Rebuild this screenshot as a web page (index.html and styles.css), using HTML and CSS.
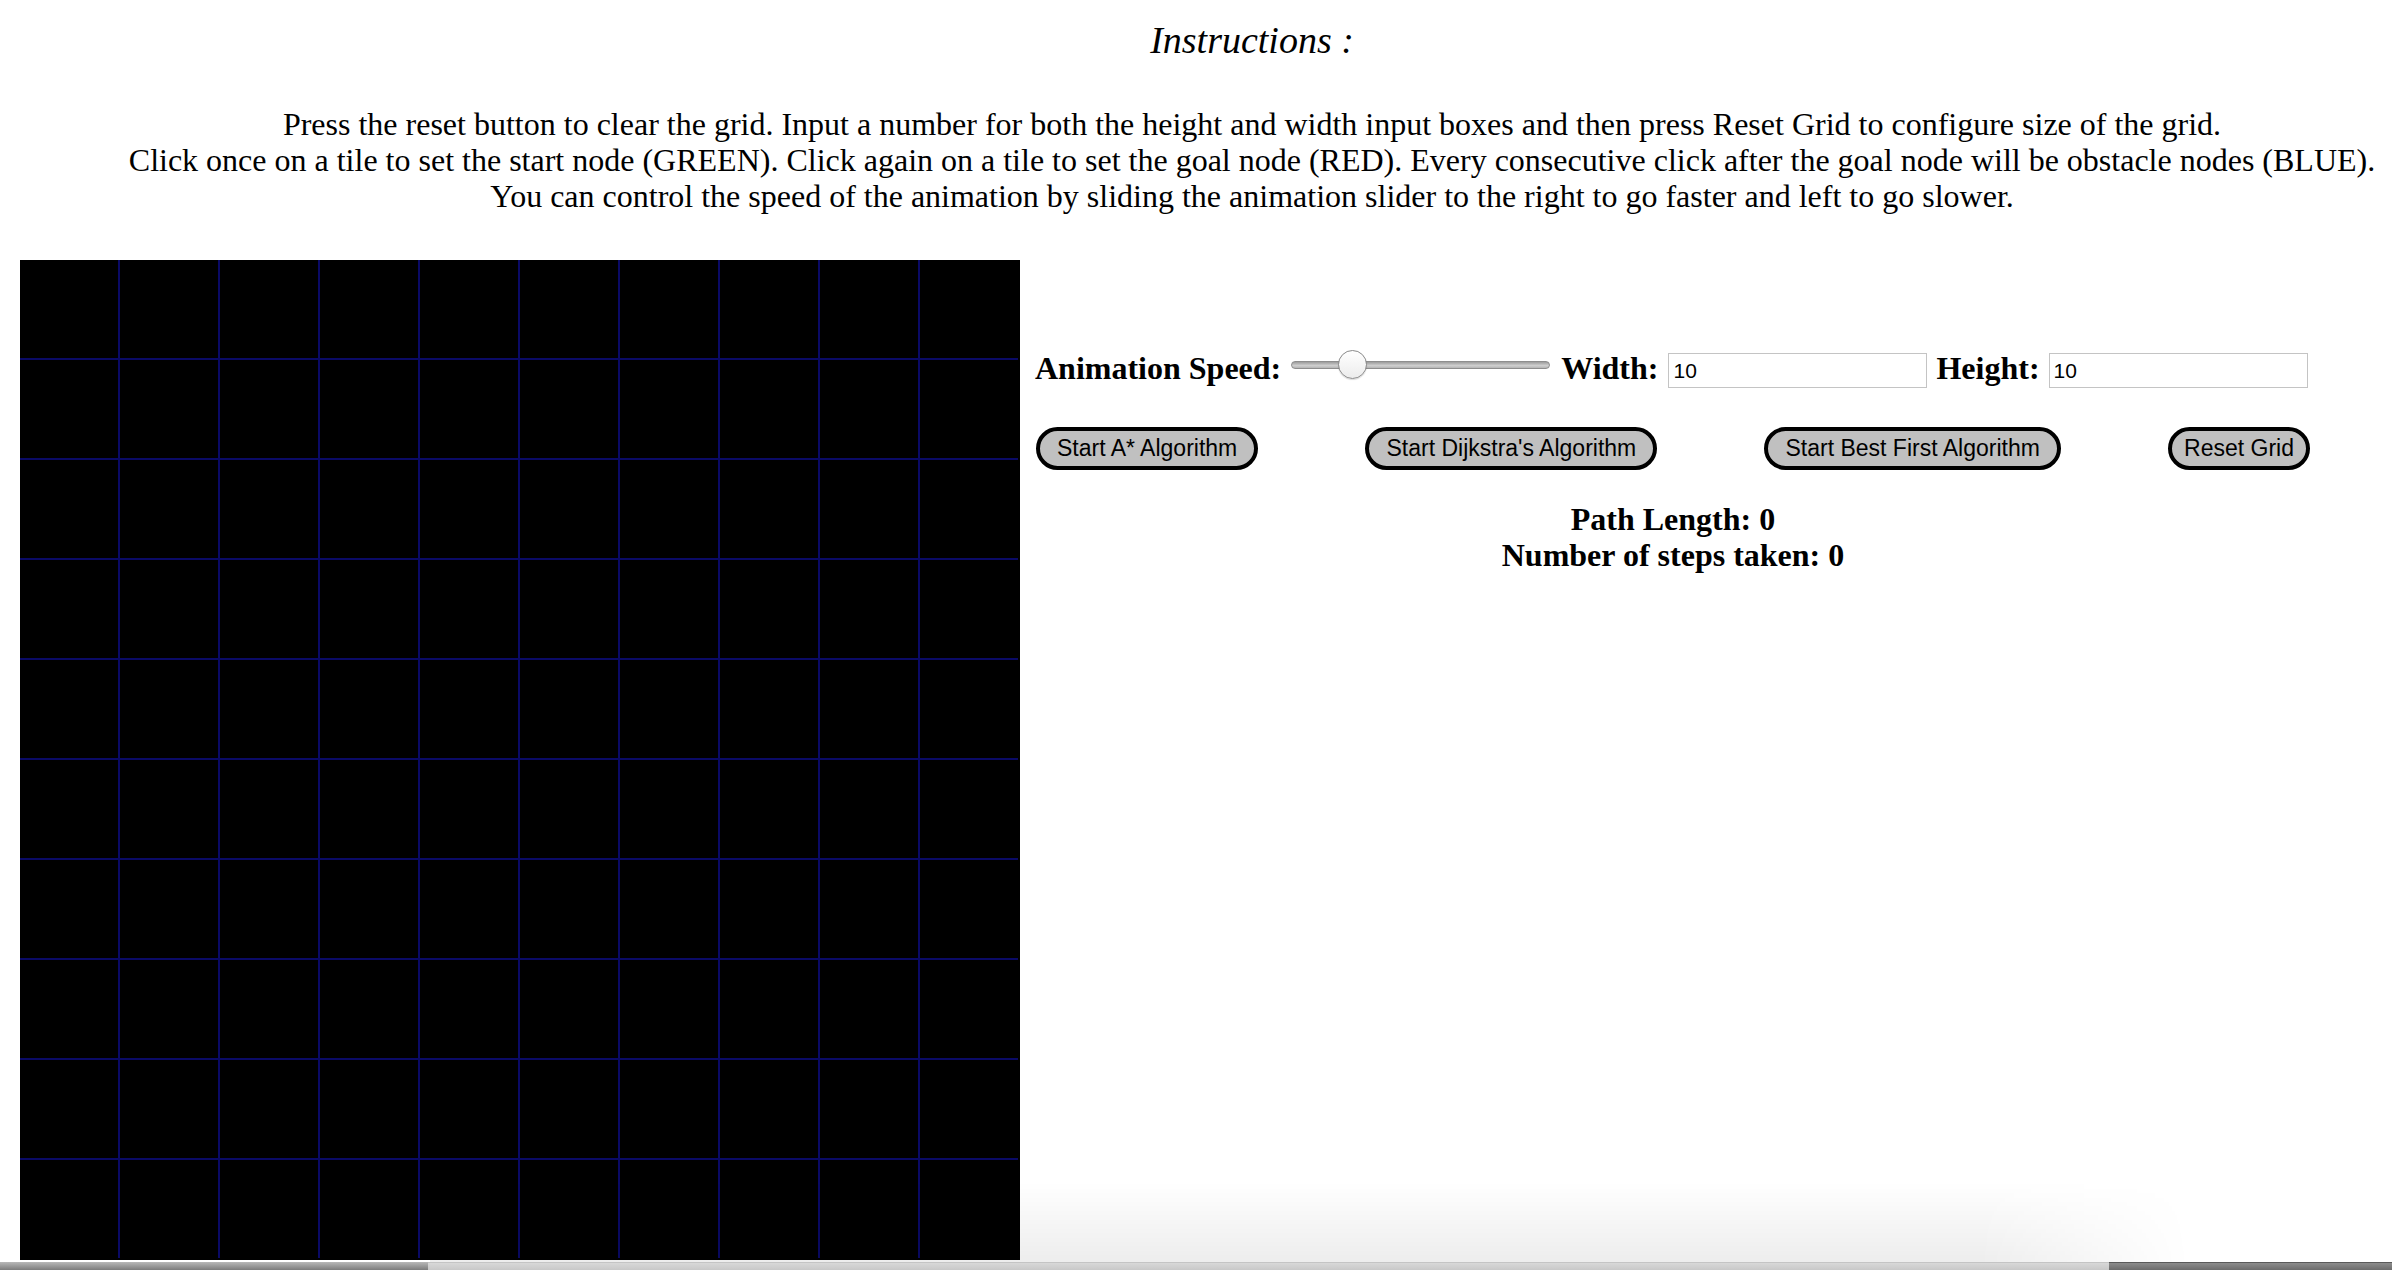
FILE: index.html
```html
<!DOCTYPE html>
<html lang="en">
<head>
<meta charset="utf-8">
<title>Pathfinding Visualizer</title>
<link rel="stylesheet" href="styles.css">
</head>
<body>
<header class="header">
  <h1 class="title">Instructions :</h1>
  <p class="instructions">Press the reset button to clear the grid. Input a number for both the height and width input boxes and then press Reset Grid to configure size of the grid.<br>Click once on a tile to set the start node (GREEN). Click again on a tile to set the goal node (RED). Every consecutive click after the goal node will be obstacle nodes (BLUE).<br>You can control the speed of the animation by sliding the animation slider to the right to go faster and left to go slower.</p>
</header>
<main class="main">
  <div class="grid">
    <div class="cell"></div><div class="cell"></div><div class="cell"></div><div class="cell"></div><div class="cell"></div><div class="cell"></div><div class="cell"></div><div class="cell"></div><div class="cell"></div><div class="cell"></div>
    <div class="cell"></div><div class="cell"></div><div class="cell"></div><div class="cell"></div><div class="cell"></div><div class="cell"></div><div class="cell"></div><div class="cell"></div><div class="cell"></div><div class="cell"></div>
    <div class="cell"></div><div class="cell"></div><div class="cell"></div><div class="cell"></div><div class="cell"></div><div class="cell"></div><div class="cell"></div><div class="cell"></div><div class="cell"></div><div class="cell"></div>
    <div class="cell"></div><div class="cell"></div><div class="cell"></div><div class="cell"></div><div class="cell"></div><div class="cell"></div><div class="cell"></div><div class="cell"></div><div class="cell"></div><div class="cell"></div>
    <div class="cell"></div><div class="cell"></div><div class="cell"></div><div class="cell"></div><div class="cell"></div><div class="cell"></div><div class="cell"></div><div class="cell"></div><div class="cell"></div><div class="cell"></div>
    <div class="cell"></div><div class="cell"></div><div class="cell"></div><div class="cell"></div><div class="cell"></div><div class="cell"></div><div class="cell"></div><div class="cell"></div><div class="cell"></div><div class="cell"></div>
    <div class="cell"></div><div class="cell"></div><div class="cell"></div><div class="cell"></div><div class="cell"></div><div class="cell"></div><div class="cell"></div><div class="cell"></div><div class="cell"></div><div class="cell"></div>
    <div class="cell"></div><div class="cell"></div><div class="cell"></div><div class="cell"></div><div class="cell"></div><div class="cell"></div><div class="cell"></div><div class="cell"></div><div class="cell"></div><div class="cell"></div>
    <div class="cell"></div><div class="cell"></div><div class="cell"></div><div class="cell"></div><div class="cell"></div><div class="cell"></div><div class="cell"></div><div class="cell"></div><div class="cell"></div><div class="cell"></div>
    <div class="cell"></div><div class="cell"></div><div class="cell"></div><div class="cell"></div><div class="cell"></div><div class="cell"></div><div class="cell"></div><div class="cell"></div><div class="cell"></div><div class="cell"></div>
  </div>
  <section class="panel">
    <div class="controls">
      <label class="label label-speed" for="speed">Animation Speed:</label>
      <input class="slider" id="speed" type="range" min="0" max="100" value="20">
      <label class="label label-width" for="width">Width:</label>
      <input class="num num-width" id="width" type="text" value="10">
      <label class="label label-height" for="height">Height:</label>
      <input class="num num-height" id="height" type="text" value="10">
    </div>
    <div class="buttons">
      <button class="btn" type="button">Start A* Algorithm</button>
      <button class="btn" type="button">Start Dijkstra's Algorithm</button>
      <button class="btn" type="button">Start Best First Algorithm</button>
      <button class="btn btn-reset" type="button">Reset Grid</button>
    </div>
    <div class="stats">
      <div>Path Length: 0</div>
      <div>Number of steps taken: 0</div>
    </div>
  </section>
</main>
<div class="dock-glow"></div>
<div class="dock">
  <div class="dock-left"></div>
  <div class="dock-mid"></div>
  <div class="dock-right"></div>
</div>
</body>
</html>
```
FILE: styles.css
```css
html {
  overflow: hidden;
}

body {
  margin: 0;
  background: #fff;
  color: #000;
  font-family: "Liberation Serif", "Times New Roman", serif;
}

.header {
  width: 2504px;
  text-align: center;
}

.title {
  margin: 0;
  padding-top: 20px;
  font-size: 38px;
  line-height: 40px;
  font-style: italic;
  font-weight: normal;
}

.instructions {
  margin: 46px 0 0;
  font-size: 32px;
  line-height: 36px;
}

.main {
  display: flex;
  align-items: flex-start;
  margin-top: 46px;
  padding-left: 20px;
}

.grid {
  flex: none;
  width: 998px;
  height: 998px;
  display: grid;
  grid-template-columns: repeat(10, 98px);
  grid-template-rows: repeat(10, 98px);
  gap: 2px;
  background: #0a0a66;
  border-right: 2px solid #000;
  border-bottom: 2px solid #000;
}

.cell {
  background: #000;
}

.panel {
  flex: none;
  width: 1274px;
  margin-left: 16px;
  padding-top: 90px;
}

.controls {
  display: flex;
  align-items: center;
  height: 37px;
}

.label {
  font-weight: bold;
  font-size: 32px;
  line-height: 37px;
  white-space: nowrap;
}

.label-speed {
  margin-left: -1px;
}

.label-width {
  margin-left: 11px;
}

.label-height {
  margin-left: 9px;
}

.slider {
  -webkit-appearance: none;
  appearance: none;
  width: 259px;
  height: 30px;
  margin: -8px 0 0 10px;
  padding: 0;
  background: transparent;
}

.slider::-webkit-slider-runnable-track {
  height: 8px;
  box-sizing: border-box;
  border-radius: 4px;
  border: 1px solid #8e8e8e;
  background: linear-gradient(#9c9c9c, #cfcfcf 60%, #b4b4b4);
}

.slider::-webkit-slider-thumb {
  -webkit-appearance: none;
  appearance: none;
  width: 29px;
  height: 29px;
  margin-top: -12px;
  border-radius: 50%;
  border: 1px solid #8a8a8a;
  background: linear-gradient(#ffffff, #ececec);
  box-shadow: 0 1px 1px rgba(0, 0, 0, 0.15);
}

.num {
  width: 259px;
  height: 35px;
  box-sizing: border-box;
  margin: 4px 0 0 10px;
  padding: 0 4px;
  border: 1px solid #c4c4c4;
  border-radius: 0;
  font-family: "Liberation Sans", Arial, sans-serif;
  font-size: 21px;
  color: #000;
  outline: none;
}

.num-height {
  margin-left: 9px;
}

.buttons {
  display: flex;
  justify-content: space-between;
  margin-top: 40px;
}

.btn {
  height: 43px;
  box-sizing: border-box;
  margin: 0;
  padding: 0 17px;
  border: 4px solid #000;
  border-radius: 22px;
  background: #c0c0c0;
  color: #000;
  font-family: "Liberation Sans", Arial, sans-serif;
  font-size: 23px;
  line-height: 35px;
  white-space: nowrap;
}

.btn-reset {
  padding: 0 12px;
}

.stats {
  margin-top: 31px;
  text-align: center;
  font-weight: bold;
  font-size: 32px;
  line-height: 36px;
}

.dock-glow {
  position: fixed;
  left: 430px;
  bottom: 8px;
  width: 1760px;
  height: 80px;
  pointer-events: none;
  background: linear-gradient(rgba(0, 0, 0, 0), rgba(0, 0, 0, 0.07));
  -webkit-mask-image: linear-gradient(to right, #000 88%, transparent);
  mask-image: linear-gradient(to right, #000 88%, transparent);
}

.dock {
  position: fixed;
  left: 0;
  right: 0;
  bottom: 0;
  height: 8px;
  display: flex;
  pointer-events: none;
}

.dock-left {
  width: 428px;
  background: linear-gradient(#b8b8b8, #7c7c7c);
}

.dock-mid {
  flex: 1;
  border-top: 1px solid #c4c4c4;
  background: linear-gradient(#d8d8d8, #c8c8c8);
}

.dock-right {
  width: 283px;
  border-top: 1px solid #5a5a5a;
  background: linear-gradient(#8c8c8c, #6c6c6c);
}
```
